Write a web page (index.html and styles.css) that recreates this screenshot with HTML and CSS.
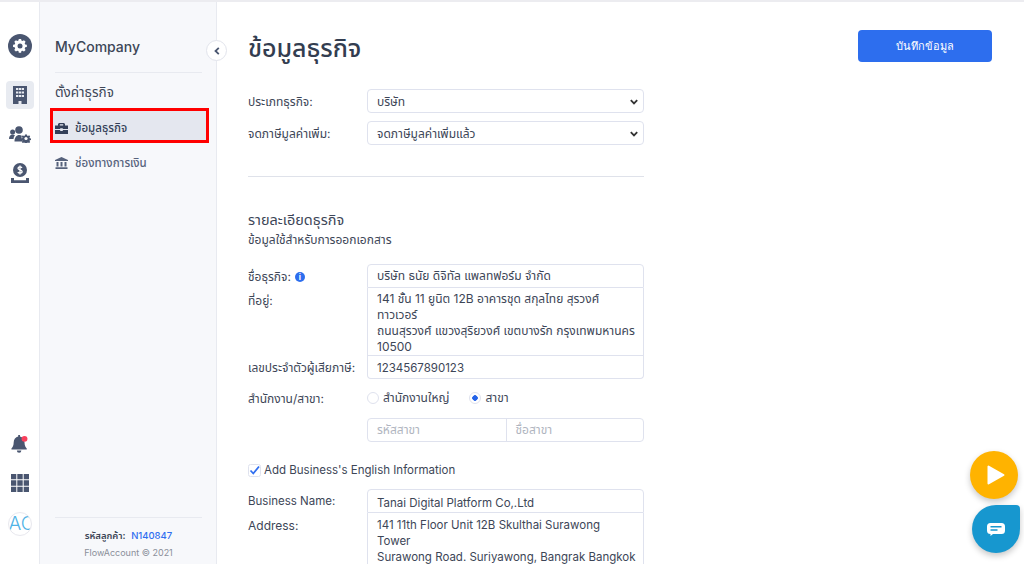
FILE: index.html
```html
<!DOCTYPE html>
<html lang="th">
<head>
<meta charset="utf-8">
<title>ข้อมูลธุรกิจ</title>
<link rel="stylesheet" href="styles.css">
</head>
<body>
<div class="app">
  <nav class="rail">
    <div class="rail-top">
      <span class="rail-btn"><svg width="24" height="24" viewBox="0 0 24 24"><circle cx="12" cy="12" r="12" fill="#4a5670"/><path fill="#fff" d="M10.600 5h2.800l.4 2 1.300.6 1.800-1 2 2-1.100 1.700.6 1.400 2 .4v2.800l-2 .4-.6 1.400 1.100 1.700-2 2-1.800-1.100-1.300.6-.4 2h-2.800l-.4-2-1.400-.6-1.700 1.100-2-2 1.100-1.700-.6-1.400-2-.4v-2.800l2-.4.600-1.400-1.100-1.700 2-2 1.700 1 1.400-.6z" transform="translate(2.100 .8) scale(.82)"/><circle cx="12" cy="11.900" r="2.500" fill="#4a5670"/></svg></span>
      <span class="rail-btn rail-btn-active"><svg width="14" height="18" viewBox="0 0 14 18"><path fill="#4a5670" fill-rule="evenodd" d="M0 0h14v18H8.500v-3h-3v3H0zM3 2v2h2.300V2zM5.900 2v2h2.200V2zM8.700 2v2H11V2zM3 5.500v2h2.300v-2zM5.900 5.500v2h2.200v-2zM8.700 5.500v2H11v-2zM3 9v2h2.300V9zM5.900 9v2h2.200V9zM8.700 9v2H11V9z"/></svg></span>
      <span class="rail-btn"><svg width="22" height="17" viewBox="0 0 22 17"><g fill="#4a5670"><circle cx="10" cy="4" r="3.800"/><circle cx="3.600" cy="6" r="2.500"/><path d="M0 13c0-2.800 1.500-4.500 3.600-4.500 1 0 1.700.3 2.300.8C5 10.500 4.600 11.800 4.500 13z"/><path d="M5.500 15.500c0-4 2-6.500 4.800-6.500 1 0 1.800.2 2.500.7-.5 1.800-.1 4 .9 5.800z"/><path d="M15.800 8h2.400l.3 1.400 1 .4 1.200-.8 1.300 1.300-.8 1.200.4 1 1.400.3v1.600l-1.400.3-.4 1 .8 1.200-1.300 1.300-1.200-.8-1 .4-.3 1.200h-2.400l-.3-1.200-1-.4-1.200.8-1.300-1.300.8-1.200-.4-1-1.400-.3v-1.600l1.400-.3.400-1-.8-1.200 1.300-1.300 1.200.8 1-.4z" transform="translate(2.700 1.800) scale(.84)"/></g><circle cx="17" cy="12.500" r="1.600" fill="#fff"/></svg></span>
      <span class="rail-btn"><svg width="18" height="20" viewBox="0 0 18 20"><circle cx="9" cy="7" r="7" fill="#4a5670"/><path fill="none" stroke="#fff" stroke-width="1.300" d="M11 4.800c-.5-.7-1.200-1-2-1-1.200 0-2 .6-2 1.500 0 2 4.100 1.200 4.100 3.300 0 1-.9 1.600-2.100 1.600-.9 0-1.700-.4-2.200-1.100M9 2.500v9"/><path fill="#4a5670" d="M0 15h3v2.200h12V15h3v5H0z"/></svg></span>
    </div>
    <div class="rail-bottom">
      <span class="rail-btn"><svg width="18" height="20" viewBox="0 0 20 20"><path fill="#4a5670" d="M8 0h2v1.600c3 .6 5 3 5 6.400 0 4 1.300 5.500 2.500 7v1H.5v-1C1.700 13.500 3 12 3 8c0-3.400 2-5.800 5-6.400z"/><path fill="#4a5670" d="M6.500 17.300h5a2.500 2.500 0 0 1-5 0z"/><circle cx="15" cy="4.300" r="3.300" fill="#f8405c"/></svg></span>
      <span class="rail-btn"><svg width="18" height="18" viewBox="0 0 18 18"><path fill="#4a5670" d="M0 0h5.300v5.300H0zM6.300 0h5.400v5.300H6.300zM12.700 0H18v5.300h-5.300zM0 6.300h5.300v5.400H0zM6.300 6.300h5.400v5.400H6.300zM12.700 6.300H18v5.400h-5.300zM0 12.700h5.300V18H0zM6.300 12.700h5.400V18H6.300zM12.700 12.700H18V18h-5.300z"/></svg></span>
      <span class="rail-btn rail-btn-avatar"><span class="avatar">AC</span></span>
    </div>
  </nav>

  <aside class="side">
    <h2 class="brand">MyCompany</h2>
    <h3 class="side-title">ตั้งค่าธุรกิจ</h3>
    <a class="side-item side-item-active">
      <svg width="13" height="11" viewBox="0 0 13 11"><path fill="#333f58" d="M4 0h5l1 1v1.500h3V6H7.800v-.8H5.200V6H0V2.500h3V1zm.8 1.200v1.300h3.400V1.200zM0 7h5.200v1h2.600V7H13v4H0z"/></svg>
      <span>ข้อมูลธุรกิจ</span>
    </a>
    <a class="side-item side-item-plain">
      <svg width="13" height="12" viewBox="0 0 13 12"><path fill="#56627c" d="M6.500 0 13 3v1H0V3zM1.500 5h2v4.500h-2zM5.500 5h2v4.500h-2zM9.500 5h2v4.500h-2zM.5 10.300h12V12H.500z"/></svg>
      <span>ช่องทางการเงิน</span>
    </a>
    <div class="side-foot">
      <p class="cust"><b>รหัสลูกค้า:</b> <span class="cust-id">N140847</span></p>
      <p class="copy">FlowAccount © 2021</p>
    </div>
    <button class="collapse" type="button" aria-label="ย่อเมนู"><svg width="6" height="8" viewBox="0 0 6 8"><path fill="none" stroke="#4a5670" stroke-width="1.800" d="M4.800 .8 1.500 4l3.300 3.200"/></svg></button>
  </aside>

  <main class="main">
    <header class="head">
      <h1 class="title">ข้อมูลธุรกิจ</h1>
      <button class="save" type="button">บันทึกข้อมูล</button>
    </header>
    <section class="form">
      <div class="row row-type">
        <label class="lbl">ประเภทธุรกิจ:</label>
        <div class="select"><span>บริษัท</span><svg width="8" height="6" viewBox="0 0 8 6"><path fill="none" stroke="#333" stroke-width="1.800" d="M.8 1.200 4 4.400l3.200-3.200"/></svg></div>
      </div>
      <div class="row">
        <label class="lbl">จดภาษีมูลค่าเพิ่ม:</label>
        <div class="select"><span>จดภาษีมูลค่าเพิ่มแล้ว</span><svg width="8" height="6" viewBox="0 0 8 6"><path fill="none" stroke="#333" stroke-width="1.800" d="M.8 1.200 4 4.400l3.200-3.200"/></svg></div>
      </div>
      <hr class="rule">
      <h3 class="sec-title">รายละเอียดธุรกิจ</h3>
      <p class="sec-sub">ข้อมูลใช้สำหรับการออกเอกสาร</p>

      <div class="group">
        <div class="row-g">
          <label class="lbl lbl-info">ชื่อธุรกิจ: <span class="info">i</span></label>
          <div class="cell cell-first">บริษัท ธนัย ดิจิทัล แพลทฟอร์ม จำกัด</div>
        </div>
        <div class="row-g">
          <label class="lbl">ที่อยู่:</label>
          <div class="cell cell-mid">141 ชั้น 11 ยูนิต 12B อาคารชุด สกุลไทย สุรวงศ์<br>ทาวเวอร์<br>ถนนสุรวงศ์ แขวงสุริยวงศ์ เขตบางรัก กรุงเทพมหานคร<br>10500</div>
        </div>
        <div class="row-g">
          <label class="lbl lbl-last">เลขประจำตัวผู้เสียภาษี:</label>
          <div class="cell cell-last cell-en">1234567890123</div>
        </div>
      </div>

      <div class="row row-radio">
        <label class="lbl">สำนักงาน/สาขา:</label>
        <div class="radios">
          <span class="radio"><i class="dot"></i>สำนักงานใหญ่</span>
          <span class="radio"><i class="dot dot-on"></i>สาขา</span>
        </div>
      </div>
      <div class="row row-branch">
        <span class="lbl"></span>
        <div class="split"><span>รหัสสาขา</span><span>ชื่อสาขา</span></div>
      </div>

      <div class="check-row">
        <svg class="check" width="13" height="13" viewBox="0 0 13 13"><rect x=".5" y=".5" width="12" height="12" rx="2" fill="#fff" stroke="#dfe2ee"/><path fill="none" stroke="#2f6ef0" stroke-width="1.800" d="M2.500 6.500 5.300 9.500 11 2.500"/></svg>
        <span>Add Business's English Information</span>
      </div>

      <div class="group">
        <div class="row-g row-g-first">
          <label class="lbl lbl-en">Business Name:</label>
          <div class="cell cell-first cell-en cell-name">Tanai Digital Platform Co,.Ltd</div>
        </div>
        <div class="row-g">
          <label class="lbl">Address:</label>
          <div class="cell cell-mid cell-en">141 11th Floor Unit 12B Skulthai Surawong<br>Tower<br>Surawong Road. Suriyawong, Bangrak Bangkok</div>
        </div>
      </div>
    </section>
  </main>
</div>

<button class="fab-play" type="button" aria-label="เล่น"><svg width="18" height="20" viewBox="0 0 18 20"><path fill="#fff" stroke="#fff" stroke-width="2" stroke-linejoin="round" d="M1.500 1.500v17L16.500 10z"/></svg></button>
<button class="fab-chat" type="button" aria-label="แชท"><svg width="18" height="13" viewBox="0 0 18 13"><path fill="#fff" d="M3.500 0h11A3.500 3.500 0 0 1 18 3.500v4a3.500 3.500 0 0 1-3.500 3.500H6l-2.500 2v-2A3.500 3.500 0 0 1 0 7.500v-4A3.500 3.500 0 0 1 3.500 0z"/><path fill="#1797cf" d="M3.500 3h11v1.600h-11zM3.500 6.200h7v1.600h-7z"/></svg></button>
</body>
</html>
```
FILE: styles.css
```css
* { box-sizing: border-box; }
html, body { margin: 0; height: 564px; overflow: hidden; background: #fff; }
body { font-family: Inter, "Noto Sans", "Noto Sans Thai", sans-serif; font-size: 12px; color: #3d4657; }
h1, h2, h3, p { margin: 0; font-weight: 400; }
.app { display: flex; height: 564px; border-top: 2px solid #ececf0; overflow: hidden; }

.rail { width: 39px; flex: none; display: flex; flex-direction: column; justify-content: space-between; align-items: center; padding: 30px 0 26px; }
.rail-top, .rail-bottom { display: flex; flex-direction: column; align-items: center; }
.rail-top { gap: 11px; }
.rail-bottom { gap: 11px; }
.rail-btn { width: 28px; height: 28px; border-radius: 4px; display: flex; align-items: center; justify-content: center; }
.rail-btn-active { margin-top: 10px; background: #e8ebf1; }
.rail-btn-avatar { margin-top: 2px; }
.avatar { width: 24px; height: 24px; border-radius: 50%; border: 1px solid #e8e8ee; overflow: hidden; color: #4fb3e6; font-size: 19px; font-weight: 300; line-height: 22px; white-space: nowrap; display: block; }

.side { position: relative; width: 178px; flex: none; background: #f7f8fb; border-left: 1px solid #e8eaf0; border-right: 1px solid #e8eaf0; padding: 0 14px 0 15px; display: flex; flex-direction: column; }
.brand { font-size: 14px; font-weight: 500; color: #3d4657; line-height: 20px; padding: 35px 0 15px; border-bottom: 1px solid #e8eaf0; }
.side-title { font-size: 13.500px; color: #3d4657; line-height: 20px; margin-top: 9px; }
.side-item { display: flex; align-items: center; gap: 7px; font-size: 11.500px; font-weight: 500; color: #56627c; }
.side-item-active { height: 35px; margin: 6px -7px 0 -5px; padding: 5px 0 0 2px; background: #e4e7ef; border: 3px solid #f00; color: #333f58; }
.side-item-plain { height: 34px; margin-top: 3px; }
.side-item svg { flex: none; }
.side-foot { margin-top: auto; border-top: 1px solid #e8eaf0; padding: 11px 0 4px; text-align: center; }
.cust { font-size: 9.500px; line-height: 14px; color: #3d4657; }
.cust b { font-weight: 600; margin-right: 3px; }
.cust-id { color: #2f6ef0; font-weight: 500; }
.copy { font-size: 9px; line-height: 14px; color: #8a8f9a; margin-top: 3px; }
.collapse { position: absolute; left: 166px; top: 38px; width: 21px; height: 21px; padding: 0; border-radius: 50%; background: #fff; border: 1px solid #e2e4ec; display: flex; align-items: center; justify-content: center; }

.main { flex: 1; min-width: 0; padding: 0 32px 0 31px; }
.head { display: flex; justify-content: space-between; align-items: flex-start; height: 87px; padding-top: 28px; }
.title { font-size: 25px; font-weight: 500; line-height: 36px; color: #333d50; }
.save { width: 134px; height: 32px; border: 0; border-radius: 4px; background: #2d6eee; color: #fff; font: 500 11px Inter, "Noto Sans", sans-serif; }

.form { width: 396px; }
.row { display: flex; align-items: center; }
.row-type { margin-bottom: 8px; }
.lbl { width: 119px; flex: none; font-size: 12px; color: #3d4657; padding-top: 1px; }
.lbl-en { font-size: 11.500px; }
.select { flex: 1; height: 24px; border: 1px solid #dfe2ee; border-radius: 4px; display: flex; align-items: center; justify-content: space-between; padding: 1px 5px 0 9px; }
.rule { border: 0; border-top: 1px solid #dfe2ea; margin: 31px 0 33px; }
.sec-title { font-size: 14.500px; line-height: 20px; color: #3d4657; }
.sec-sub { font-size: 12px; line-height: 20px; margin-bottom: 14px; }

.group { display: flex; flex-direction: column; }
.row-g { display: flex; align-items: flex-start; }
.row-g .lbl { line-height: 23px; }
.row-g .lbl-last { padding-top: 0; }
.lbl-info { display: flex; align-items: center; gap: 4px; }
.info { width: 10px; height: 10px; border-radius: 50%; background: #2d6eee; color: #fff; font-size: 8px; font-weight: 700; line-height: 10px; text-align: center; }
.cell { flex: 1; border: 1px solid #dfe2ee; padding: 3px 2px 0 9px; line-height: 16px; height: 24px; white-space: nowrap; }
.cell-en { font-size: 11.500px; padding-top: 4px; }
.cell-name { padding-top: 5px; }
.cell-first { border-radius: 4px 4px 0 0; }
.cell-mid { border-top: 0; height: 68px; }
.cell-last { border-top: 0; border-radius: 0 0 4px 4px; height: 23px; padding-top: 4px; }
.row-radio { height: 24px; margin-top: 7px; }
.radios { display: flex; gap: 20px; }
.radio { display: flex; align-items: center; gap: 4px; font-size: 12px; }
.dot { width: 12px; height: 12px; border-radius: 50%; border: 1px solid #dfe2ee; background: #fff; display: block; }
.dot-on { background: radial-gradient(circle, #2463e8 0 2.500px, #fff 3px); }
.row-branch { margin-top: 8px; }
.split { flex: 1; height: 24px; border: 1px solid #dfe2ee; border-radius: 4px; display: grid; grid-template-columns: 1fr 1fr; color: #b0b5c0; line-height: 22px; }
.split span { padding: 0 9px; }
.split span + span { border-left: 1px solid #dfe2ee; }
.check-row { display: flex; align-items: center; gap: 3px; height: 20px; margin: 18px 0 9px; font-size: 11.500px; }
.check { flex: none; }

.fab-play { position: absolute; left: 970px; top: 451px; width: 48px; height: 48px; padding: 0 0 0 4px; border: 0; border-radius: 50%; background: #ffb300; box-shadow: 0 3px 6px rgba(0,0,0,.22); display: flex; align-items: center; justify-content: center; }
.fab-chat { position: absolute; left: 972px; top: 505px; width: 48px; height: 48px; padding: 0; border: 0; border-radius: 50% 4px 50% 50%; background: #1797cf; box-shadow: 0 3px 6px rgba(0,0,0,.22); display: flex; align-items: center; justify-content: center; }
```
